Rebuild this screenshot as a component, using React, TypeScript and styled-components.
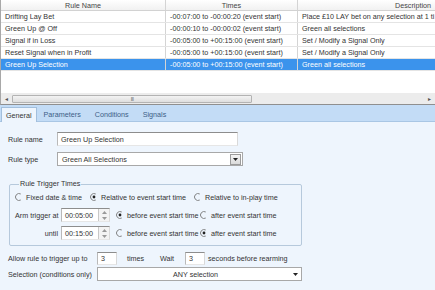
import styled, { createGlobalStyle } from 'styled-components';

const GlobalStyle = createGlobalStyle`
  html, body { margin: 0; padding: 0; background: #fff; }
  body { font-family: "Liberation Sans", Arial, sans-serif; }
`;

type Rule = { name: string; times: string; description: string; selected?: boolean };

const rules: Rule[] = [
  { name: 'Drifting Lay Bet', times: '-00:07:00 to -00:00:20 (event start)', description: 'Place £10 LAY bet on any selection at 1 ti' },
  { name: 'Green Up @ Off', times: '-00:00:10 to -00:00:02 (event start)', description: 'Green all selections' },
  { name: 'Signal if in Loss', times: '-00:05:00 to +00:15:00 (event start)', description: 'Set / Modify a Signal Only' },
  { name: 'Reset Signal when in Profit', times: '-00:05:00 to +00:15:00 (event start)', description: 'Set / Modify a Signal Only' },
  { name: 'Green Up Selection', times: '-00:05:00 to +00:15:00 (event start)', description: 'Green all selections', selected: true },
];

const Window = styled.div`
  width: 435px;
  height: 290px;
  overflow: hidden;
  font-size: 7.2px;
  color: #333;
  display: flex;
  flex-direction: column;
`;

const Grid = styled.div`
  height: 93px;
  border-left: 1px solid #a8a8a8;
  background: #fff;
  overflow: hidden;
`;

const GridRow = styled.div<{ $selected?: boolean; $header?: boolean }>`
  display: grid;
  grid-template-columns: 165px 132px 138px;
  height: ${(p) => (p.$header ? 11 : 12)}px;
  box-sizing: border-box;
  border-bottom: 1px solid ${(p) => (p.$header ? '#d2d2d2' : '#e4e4e4')};
  background: ${(p) => (p.$selected ? '#3b93ec' : p.$header ? 'linear-gradient(#ffffff, #f1f1f1)' : '#fff')};
  color: ${(p) => (p.$selected ? '#fff' : p.$header ? '#444' : '#333')};
`;

const Cell = styled.div<{ $align?: 'center' | 'end' }>`
  display: flex;
  align-items: center;
  justify-content: ${(p) => (p.$align === 'center' ? 'center' : p.$align === 'end' ? 'flex-end' : 'flex-start')};
  padding: 0 ${(p) => (p.$align === 'end' ? 4 : 0)}px 0 ${(p) => (p.$align ? 0 : 4)}px;
  border-right: 1px solid #d4d4d4;
  white-space: nowrap;
  overflow: hidden;
`;

const ScrollBar = styled.div`
  height: 11px;
  display: flex;
  align-items: center;
  background: #ececec;
  border-left: 1px solid #a8a8a8;
  border-bottom: 1px solid #8f8f8f;
  color: #555;
  font-size: 6px;
`;

const ScrollArrow = styled.div`
  width: 11px;
  display: flex;
  justify-content: center;
`;

const Thumb = styled.div`
  width: 240px;
  height: 8px;
  box-sizing: border-box;
  border: 1px solid #b3b3b3;
  border-radius: 1px;
  background: linear-gradient(#f3f3f3, #dedede);
  display: flex;
  align-items: center;
  justify-content: center;
  letter-spacing: -0.5px;
  font-size: 5px;
  color: #666;
`;

const Track = styled.div`
  flex: 1;
`;

const TabStrip = styled.div`
  height: 17px;
  background: #c3dcf6;
  border-bottom: 1px solid #a9c6e4;
  display: flex;
  align-items: flex-end;
  padding-left: 1px;
  box-sizing: border-box;
`;

const Tab = styled.div<{ $active?: boolean }>`
  height: ${(p) => (p.$active ? 15 : 14)}px;
  box-sizing: border-box;
  padding: 0 ${(p) => (p.$active ? 4 : 6)}px;
  display: flex;
  align-items: center;
  color: ${(p) => (p.$active ? '#333' : '#3d5f86')};
  background: ${(p) => (p.$active ? '#eef5fd' : 'transparent')};
  border: ${(p) => (p.$active ? '1px solid #a3bfdc' : '1px solid transparent')};
  border-bottom: none;
  margin-bottom: ${(p) => (p.$active ? -1 : 0)}px;
`;

const Panel = styled.div`
  flex: 1;
  background: #eef5fd;
  padding: 10px 0 0 8px;
  display: flex;
  flex-direction: column;
`;

const FieldRow = styled.div<{ $gap?: number; $height?: number }>`
  display: flex;
  align-items: center;
  height: ${(p) => p.$height ?? 14}px;
  margin-top: ${(p) => p.$gap ?? 0}px;
`;

const Label = styled.div<{ $width?: number; $right?: boolean }>`
  width: ${(p) => (p.$width ? `${p.$width}px` : 'auto')};
  flex: none;
  text-align: ${(p) => (p.$right ? 'right' : 'left')};
  padding-right: ${(p) => (p.$right ? 3 : 0)}px;
  box-sizing: border-box;
  white-space: nowrap;
`;

const TextBox = styled.div<{ $width: number; $height?: number }>`
  width: ${(p) => p.$width}px;
  height: ${(p) => p.$height ?? 14}px;
  box-sizing: border-box;
  background: #fff;
  border: 1px solid;
  border-color: #8d8d8d #d9d9d9 #e6e6e6 #b9b9b9;
  display: flex;
  align-items: center;
  padding-left: 3px;
  flex: none;
`;

const Combo = styled.div<{ $width: number }>`
  width: ${(p) => p.$width}px;
  height: 14px;
  box-sizing: border-box;
  background: #fff;
  border: 1px solid #a8a8a8;
  display: flex;
  align-items: center;
  padding-left: 4px;
  flex: none;
`;

const ComboText = styled.div<{ $center?: boolean }>`
  flex: 1;
  text-align: ${(p) => (p.$center ? 'center' : 'left')};
`;

const DropButton = styled.div`
  width: 11px;
  height: 11px;
  margin-right: 1px;
  box-sizing: border-box;
  border: 1px solid #9c9c9c;
  background: linear-gradient(#f4f4f4, #dadada);
  display: flex;
  align-items: center;
  justify-content: center;
`;

const PlainArrow = styled.div`
  width: 12px;
  display: flex;
  justify-content: center;
`;

const Group = styled.fieldset`
  margin: 14px 0 0 1px;
  width: 293px;
  box-sizing: border-box;
  border: 1px solid #b6c9dc;
  border-radius: 2px;
  padding: 0 0 5px 5px;
  display: flex;
  flex-direction: column;
`;

const Legend = styled.legend`
  padding: 0 1px;
  margin-left: 4px;
  line-height: 8px;
`;

const Option = styled.div<{ $width?: number; $offset?: number }>`
  display: flex;
  align-items: center;
  gap: 3px;
  width: ${(p) => (p.$width ? `${p.$width}px` : 'auto')};
  margin-left: ${(p) => p.$offset ?? 0}px;
  flex: none;
  white-space: nowrap;
`;

const Spinner = styled.div`
  margin-left: auto;
  width: 11px;
  height: 12px;
  box-sizing: border-box;
  border-left: 1px solid #c8c8c8;
  background: #f3f3f3;
  display: flex;
  flex-direction: column;
  align-items: center;
  justify-content: space-around;
`;

const Radio = ({ checked }: { checked?: boolean }) => (
  <svg width="8" height="8" viewBox="0 0 8 8">
    <path d="M5.75 0.97 A3.5 3.5 0 1 0 5.75 7.03" fill="none" stroke="#777" strokeWidth="0.9" />
    {checked && <circle cx="4" cy="4" r="1.4" fill="#222" />}
  </svg>
);

const Tri = ({ up, color = '#222' }: { up?: boolean; color?: string }) => (
  <svg width="5" height="3" viewBox="0 0 5 3">
    <path d={up ? 'M0 3 L2.5 0 L5 3 Z' : 'M0 0 L5 0 L2.5 3 Z'} fill={color} />
  </svg>
);

const TimeBox = ({ value }: { value: string }) => (
  <TextBox $width={49}>
    {value}
    <Spinner>
      <Tri up color="#999" />
      <Tri color="#999" />
    </Spinner>
  </TextBox>
);

export default function App() {
  return (
    <Window>
      <GlobalStyle />
      <Grid>
        <GridRow $header>
          <Cell $align="center">Rule Name</Cell>
          <Cell $align="center">Times</Cell>
          <Cell $align="end">Description</Cell>
        </GridRow>
        {rules.map((r) => (
          <GridRow key={r.name} $selected={r.selected}>
            <Cell>{r.name}</Cell>
            <Cell>{r.times}</Cell>
            <Cell>{r.description}</Cell>
          </GridRow>
        ))}
      </Grid>
      <ScrollBar>
        <ScrollArrow>◂</ScrollArrow>
        <Thumb>III</Thumb>
        <Track />
        <ScrollArrow>▸</ScrollArrow>
      </ScrollBar>
      <TabStrip>
        <Tab $active>General</Tab>
        <Tab>Parameters</Tab>
        <Tab>Conditions</Tab>
        <Tab>Signals</Tab>
      </TabStrip>
      <Panel>
        <FieldRow>
          <Label $width={49}>Rule name</Label>
          <TextBox $width={181}>Green Up Selection</TextBox>
        </FieldRow>
        <FieldRow $gap={6}>
          <Label $width={49}>Rule type</Label>
          <Combo $width={186}>
            <ComboText>Green All Selections</ComboText>
            <DropButton>
              <Tri />
            </DropButton>
          </Combo>
        </FieldRow>
        <Group>
          <Legend>Rule Trigger Times</Legend>
          <FieldRow $gap={2}>
            <Option $width={75}>
              <Radio />
              Fixed date &amp; time
            </Option>
            <Option $width={104}>
              <Radio checked />
              Relative to event start time
            </Option>
            <Option>
              <Radio />
              Relative to in-play time
            </Option>
          </FieldRow>
          <FieldRow $gap={4}>
            <Label $width={46} $right>Arm trigger at</Label>
            <TimeBox value="00:05:00" />
            <Option $width={84} $offset={6}>
              <Radio checked />
              before event start time
            </Option>
            <Option>
              <Radio />
              after event start time
            </Option>
          </FieldRow>
          <FieldRow $gap={4}>
            <Label $width={46} $right>until</Label>
            <TimeBox value="00:15:00" />
            <Option $width={84} $offset={6}>
              <Radio />
              before event start time
            </Option>
            <Option>
              <Radio checked />
              after event start time
            </Option>
          </FieldRow>
        </Group>
        <FieldRow $gap={6} $height={13}>
          <Label $width={89}>Allow rule to trigger up to</Label>
          <TextBox $width={20} $height={13}>3</TextBox>
          <Label $width={33} style={{ marginLeft: 10 }}>times</Label>
          <Label $width={25}>Wait</Label>
          <TextBox $width={20} $height={13}>3</TextBox>
          <Label style={{ marginLeft: 3 }}>seconds before rearming</Label>
        </FieldRow>
        <FieldRow $gap={2}>
          <Label $width={89}>Selection (conditions only)</Label>
          <Combo $width={205}>
            <ComboText $center>ANY selection</ComboText>
            <PlainArrow>
              <Tri />
            </PlainArrow>
          </Combo>
        </FieldRow>
      </Panel>
    </Window>
  );
}
